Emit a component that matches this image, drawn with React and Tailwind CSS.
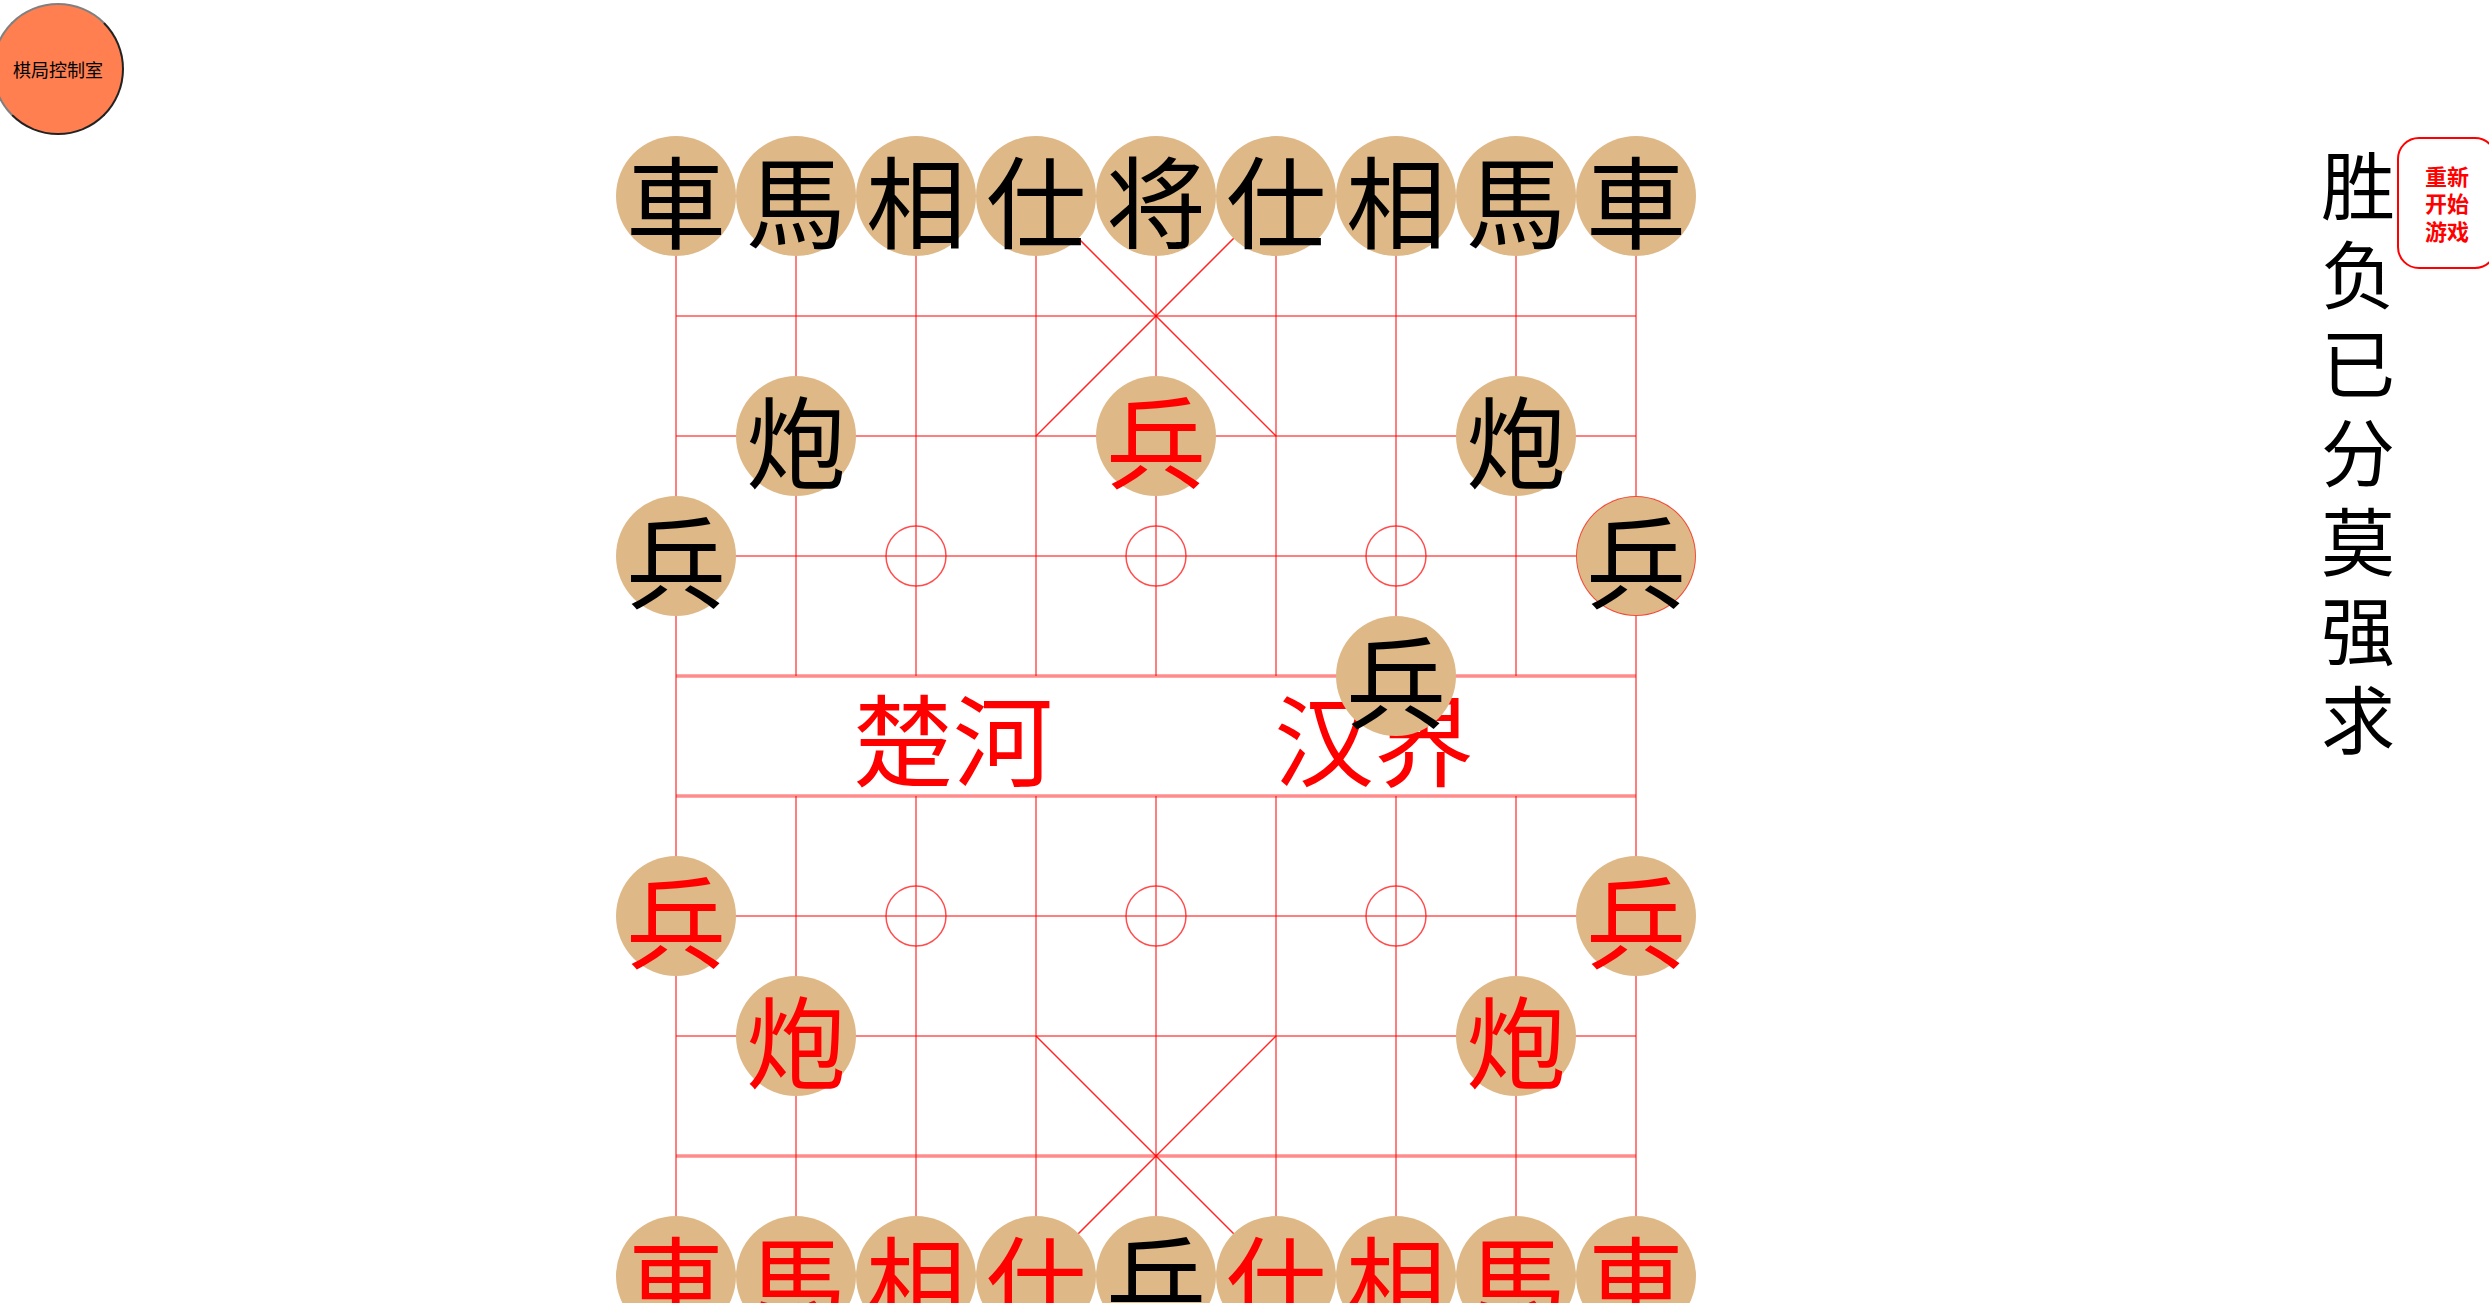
import React from "react";

const B = (t) => ({ t, side: "black" });
const R = (t) => ({ t, side: "red" });
const _ = null;

const board = [
  [B("車"), B("馬"), B("相"), B("仕"), B("将"), B("仕"), B("相"), B("馬"), B("車")],
  [_, _, _, _, _, _, _, _, _],
  [_, B("炮"), _, _, R("兵"), _, _, B("炮"), _],
  [B("兵"), _, _, _, _, _, _, _, { ...B("兵"), selected: true }],
  [_, _, _, _, _, _, B("兵"), _, _],
  [_, _, _, _, _, _, _, _, _],
  [R("兵"), _, _, _, _, _, _, _, R("兵")],
  [_, R("炮"), _, _, _, _, _, R("炮"), _],
  [_, _, _, _, _, _, _, _, _],
  [R("車"), R("馬"), R("相"), R("仕"), B("兵"), R("仕"), R("相"), R("馬"), R("車")],
];

const cell = 120;
const pos = (i) => 60 + i * cell;

function BoardLines() {
  const lines = [];
  for (let r = 0; r < 10; r++) {
    const thick = r === 4 || r === 5 || r === 8;
    lines.push(
      <line key={`h${r}`} x1={pos(0)} x2={pos(8)} y1={pos(r)} y2={pos(r)}
        stroke="#ff0000" strokeOpacity={thick ? 0.45 : 0.5} strokeWidth={thick ? 3.5 : 2} />
    );
  }
  for (let c = 0; c < 9; c++) {
    if (c === 0 || c === 8) {
      lines.push(<line key={`v${c}`} x1={pos(c)} x2={pos(c)} y1={pos(0)} y2={pos(9)} stroke="#ff0000" strokeOpacity={0.5} strokeWidth={2} />);
    } else {
      lines.push(<line key={`vt${c}`} x1={pos(c)} x2={pos(c)} y1={pos(0)} y2={pos(4)} stroke="#ff0000" strokeOpacity={0.5} strokeWidth={2} />);
      lines.push(<line key={`vb${c}`} x1={pos(c)} x2={pos(c)} y1={pos(5)} y2={pos(9)} stroke="#ff0000" strokeOpacity={0.5} strokeWidth={2} />);
    }
  }
  const diag = [
    [3, 0, 5, 2], [5, 0, 3, 2],
    [3, 7, 5, 9], [5, 7, 3, 9],
  ];
  diag.forEach(([c1, r1, c2, r2], i) =>
    lines.push(<line key={`d${i}`} x1={pos(c1)} y1={pos(r1)} x2={pos(c2)} y2={pos(r2)} stroke="#ff0000" strokeOpacity={0.85} strokeWidth={1.5} />)
  );
  [3, 6].forEach((r) =>
    [2, 4, 6].forEach((c) =>
      lines.push(<circle key={`m${r}${c}`} cx={pos(c)} cy={pos(r)} r={30} fill="none" stroke="#ff0000" strokeOpacity={0.7} strokeWidth={1.5} />)
    )
  );
  return (
    <svg className="absolute left-0 top-0" width={1080} height={1200}>
      {lines}
    </svg>
  );
}

function Piece({ piece }) {
  if (!piece) return <div className="w-[120px] h-[120px]" />;
  return (
    <div
      className={`relative z-10 w-[120px] h-[120px] rounded-full bg-[#deb887] flex items-center justify-center pt-[4px] text-[100px] leading-none ${
        piece.side === "red" ? "text-[#ff0000]" : "text-black"
      } ${piece.selected ? "border border-[#ff0000]/60" : ""}`}
    >
      {piece.t}
    </div>
  );
}

export default function App() {
  return (
    <div className="relative h-screen w-full overflow-hidden bg-white font-['Noto_Sans_CJK_SC',sans-serif]">
      <button className="absolute left-[-8px] top-[3px] w-[132px] h-[132px] rounded-full bg-[#ff7f50] border-2 border-t-[#808080] border-l-[#808080] border-b-[#222] border-r-[#222] text-[18px] text-black leading-none flex items-center justify-center">
        棋局控制室
      </button>

      <div className="flex items-start">
        <div className="relative ml-[616px] mt-[136px] w-[1080px] h-[1200px] shrink-0">
          <BoardLines />
          <div className="absolute left-[60px] top-[540px] w-[960px] h-[120px] flex items-center pl-[177px] gap-[221px] text-[100px] leading-none text-[#ff0000]">
            <span>楚河</span>
            <span>汉界</span>
          </div>
          <div className="relative grid grid-cols-[repeat(9,120px)] grid-rows-[repeat(10,120px)]">
            {board.map((row, r) =>
              row.map((p, c) => <Piece key={`${r}-${c}`} piece={p} />)
            )}
          </div>
        </div>

        <div className="flex items-start ml-[625px] mt-[137px] shrink-0">
          <div className="mt-0 w-[74px] flex flex-col text-[74px] leading-[89px] text-black">
            {"胜负已分莫强求".split("").map((ch) => (
              <span key={ch}>{ch}</span>
            ))}
          </div>
          <button className="ml-[2px] w-[100px] h-[132px] shrink-0 rounded-[22px] border-2 border-[#ff0000] text-[#ff0000] text-[22px] font-bold leading-[27.5px] flex flex-col items-center justify-center">
            <span>重新</span>
            <span>开始</span>
            <span>游戏</span>
          </button>
        </div>
      </div>
    </div>
  );
}
